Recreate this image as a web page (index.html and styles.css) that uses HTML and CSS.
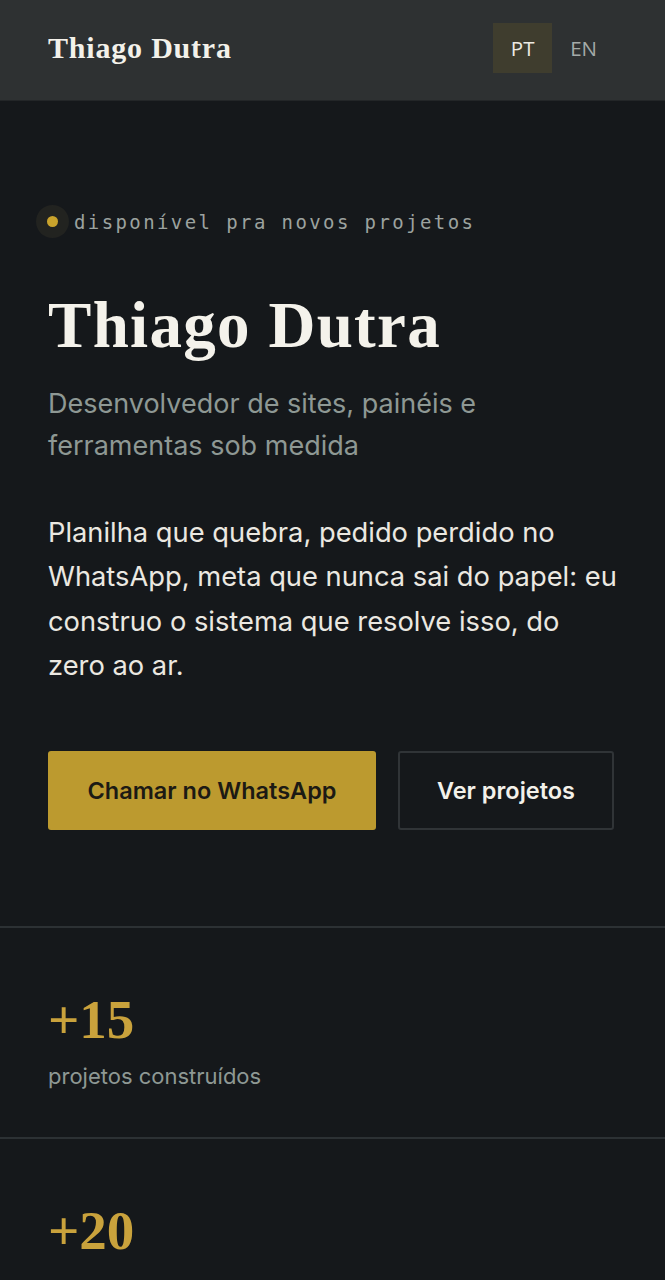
FILE: index.html
```html
<!DOCTYPE html>
<html lang="pt">
<head>
<meta charset="utf-8">
<title>Thiago Dutra</title>
<link rel="stylesheet" href="styles.css">
</head>
<body>
<header class="topbar">
  <div class="brand">Thiago Dutra</div>
  <nav class="lang">
    <span class="lang-btn active">PT</span>
    <span class="lang-btn">EN</span>
  </nav>
</header>
<main>
  <section class="hero">
    <div class="status"><span class="dot"></span><span class="status-text">disponível pra novos projetos</span></div>
    <h1 class="title">Thiago Dutra</h1>
    <p class="subtitle">Desenvolvedor de sites, painéis e ferramentas sob medida</p>
    <p class="intro">Planilha que quebra, pedido perdido no WhatsApp, meta que nunca sai do papel: eu construo o sistema que resolve isso, do zero ao ar.</p>
    <div class="actions">
      <a class="btn btn-primary" href="#">Chamar no WhatsApp</a>
      <a class="btn btn-ghost" href="#">Ver projetos</a>
    </div>
  </section>
  <section class="stats">
    <div class="stat">
      <div class="stat-num">+15</div>
      <div class="stat-label">projetos construídos</div>
    </div>
    <div class="stat">
      <div class="stat-num">+20</div>
    </div>
  </section>
</main>
</body>
</html>
```
FILE: styles.css
```css
* { box-sizing: border-box; }
html, body { margin: 0; padding: 0; }
body {
  background: #15181b;
  color: #ece9e2;
  font-family: Inter, Roboto, "Liberation Sans", sans-serif;
  overflow: hidden;
}
.topbar {
  height: 101px;
  background: #2e3132;
  border-bottom: 1px solid #232628;
  display: flex;
  align-items: center;
  justify-content: space-between;
  padding: 0 48px 4px;
}
.brand {
  font-family: "Liberation Serif", serif;
  font-weight: 700;
  font-size: 30px;
  color: #f3f1ea;
  letter-spacing: 0.8px;
}
.lang { display: flex; align-items: center; margin-right: 3px; }
.lang-btn {
  display: flex; align-items: center; justify-content: center;
  height: 50px;
  padding: 0 17px 0 18px;
  font-size: 20.5px;
  color: #a4aaa8;
  font-family: "Open Sans", sans-serif;
}
.lang-btn.active { background: #3f3d2e; color: #eceae2; width: 59px; padding: 0; }
.hero { padding: 104px 48px 96px; }
.status { display: flex; align-items: center; margin-left: -12px; }
.dot {
  width: 33px; height: 33px; border-radius: 50%;
  background: #222320;
  display: flex; align-items: center; justify-content: center;
  margin-right: 5px;
}
.dot::after {
  content: ""; width: 11px; height: 11px; border-radius: 50%; background: #c9a32c;
}
.status-text {
  font-family: "DejaVu Sans Mono", monospace;
  font-size: 19px;
  letter-spacing: 2.4px;
  color: #9ca29f;
}
.title {
  font-family: "Liberation Serif", serif;
  font-weight: 700;
  font-size: 65px;
  letter-spacing: 1.3px;
  line-height: 1.1;
  margin: 52px 0 0;
  color: #f4f2eb;
}
.subtitle {
  font-size: 27px;
  line-height: 42px;
  color: #8e9894;
  margin: 21px 0 0;
  max-width: 450px;
}
.intro {
  font-size: 27.3px;
  line-height: 44.5px;
  color: #ebe8e1;
  margin: 44px 0 0;
}
.actions { display: flex; gap: 22px; margin-top: 62px; }
.btn {
  display: flex; align-items: center; justify-content: center;
  height: 79px;
  font-size: 23.5px;
  font-weight: 600;
  text-decoration: none;
  border-radius: 3px;
}
.btn-primary { width: 328px; background: #bc9a2f; color: #1c1a14; }
.btn-ghost { width: 216px; border: 2px solid #303437; color: #f3f1ea; }
.stats { border-top: 2px solid #2c3134; }
.stat { padding: 64px 48px 48px; border-bottom: 2px solid #2c3134; }
.stat-num {
  font-family: "Liberation Serif", serif;
  font-weight: 700;
  font-size: 55px;
  color: #c9a23c;
  line-height: 1;
}
.stat-label { font-size: 22px; color: #8e9894; margin-top: 16px; }
```
